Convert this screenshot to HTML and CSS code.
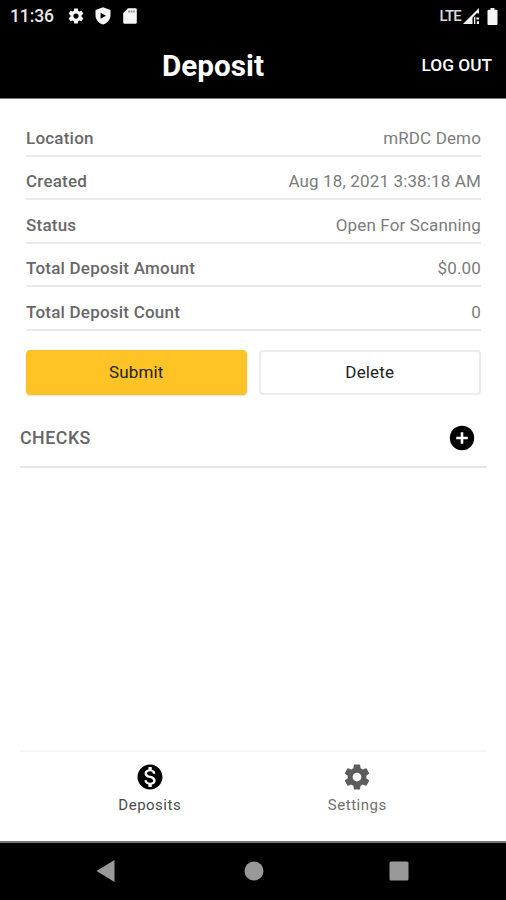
FILE: index.html
```html
<!DOCTYPE html>
<html lang="en">
<head>
<meta charset="utf-8">
<title>Deposit</title>
<link rel="stylesheet" href="styles.css">
</head>
<body>
<svg class="defs" width="0" height="0" aria-hidden="true">
  <symbol id="gear" viewBox="0 0 24 24"><path d="M19.43 12.98c.04-.32.07-.64.07-.98s-.03-.66-.07-.98l2.11-1.65c.19-.15.24-.42.12-.64l-2-3.46c-.12-.22-.39-.3-.61-.22l-2.49 1c-.52-.4-1.08-.73-1.69-.98l-.38-2.65C14.46 2.18 14.25 2 14 2h-4c-.25 0-.46.18-.49.42l-.38 2.65c-.61.25-1.17.59-1.69.98l-2.49-1c-.23-.09-.49 0-.61.22l-2 3.46c-.13.22-.07.49.12.64l2.11 1.65c-.04.32-.07.65-.07.98s.03.66.07.98l-2.11 1.65c-.19.15-.24.42-.12.64l2 3.46c.12.22.39.3.61.22l2.49-1c.52.4 1.08.73 1.69.98l.38 2.65c.03.24.24.42.49.42h4c.25 0 .46-.18.49-.42l.38-2.65c.61-.25 1.17-.59 1.69-.98l2.49 1c.23.09.49 0 .61-.22l2-3.46c.12-.22.07-.49-.12-.64l-2.11-1.65zM12 15.5c-1.93 0-3.5-1.57-3.5-3.5s1.57-3.5 3.5-3.5 3.5 1.57 3.5 3.5-1.57 3.5-3.5 3.5z"/></symbol>
</svg>
<header>
  <div class="status">
    <span class="clock">11:36</span>
    <svg class="s-gear"><use href="#gear"/></svg>
    <svg class="s-shield" viewBox="0 0 16 18"><path fill-rule="evenodd" d="M8 .3 15.5 3v5.4c0 4.200-3.200 7.600-7.500 9.100C3.700 16 .5 12.600 .5 8.400V3zM5.600 5.800v6L11 8.800z"/></svg>
    <svg class="s-card" viewBox="0 0 14 16"><path fill-rule="evenodd" d="M5 .3h7.500A1.300 1.300 0 0 1 13.800 1.600v12.800a1.300 1.300 0 0 1-1.300 1.300h-11A1.300 1.300 0 0 1 .2 14.400V5z"/><path class="card-pins" d="M5.200 2.500h1.600v2H5.200zM7.700 2.500h1.600v2H7.700zM10.200 2.500h1.600v2h-1.600z"/></svg>
    <span class="lte">LTE</span>
    <svg class="s-signal" viewBox="0 0 16 16"><path d="M0 16 16 0v5.500h-1.500V4.500L9.500 9.500V16zM11 9.500 12.300 8.200V16H11zM13.400 9.500H16v2h-2.600zM13.800 13.300H16V16h-2.200z"/></svg>
    <svg class="s-battery" viewBox="0 0 10 17"><path d="M3 0h4v1.800h2a1 1 0 0 1 1 1V16a1 1 0 0 1-1 1H1a1 1 0 0 1-1-1V2.800a1 1 0 0 1 1-1h2z"/></svg>
  </div>
  <div class="title-bar">
    <h1>Deposit</h1>
    <a class="logout">LOG OUT</a>
  </div>
</header>
<main>
  <dl class="details">
    <div class="row"><dt>Location</dt><dd>mRDC Demo</dd></div>
    <div class="row"><dt>Created</dt><dd>Aug 18, 2021 3:38:18 AM</dd></div>
    <div class="row"><dt>Status</dt><dd>Open For Scanning</dd></div>
    <div class="row"><dt>Total Deposit Amount</dt><dd>$0.00</dd></div>
    <div class="row"><dt>Total Deposit Count</dt><dd>0</dd></div>
  </dl>
  <div class="actions">
    <button class="submit">Submit</button>
    <button class="delete">Delete</button>
  </div>
  <section class="checks">
    <h2>CHECKS</h2>
    <svg class="add" viewBox="0 0 26 26"><circle cx="13" cy="13" r="12.200"/><path d="M13 7.200v11.600M7.200 13h11.600" stroke="#fff" stroke-width="2.600"/></svg>
  </section>
</main>
<nav class="tabs">
  <a class="tab active"><svg class="tab-icon" viewBox="0 0 24 24"><path d="M12 2C6.480 2 2 6.480 2 12s4.480 10 10 10 10-4.480 10-10S17.520 2 12 2zm1.410 16.090V20h-2.670v-1.930c-1.710-.36-3.160-1.460-3.270-3.400h1.960c.1 1.050.82 1.870 2.650 1.870 1.960 0 2.400-.98 2.400-1.590 0-.83-.44-1.610-2.670-2.140-2.480-.6-4.180-1.620-4.180-3.670 0-1.720 1.390-2.840 3.110-3.210V4h2.670v1.950c1.860.45 2.790 1.860 2.850 3.390H14.300c-.05-1.110-.64-1.870-2.220-1.870-1.500 0-2.400.68-2.400 1.640 0 .84.65 1.390 2.670 1.910s4.180 1.390 4.180 3.910c-.01 1.830-1.380 2.830-3.120 3.160z"/></svg><span>Deposits</span></a>
  <a class="tab"><svg class="tab-icon"><use href="#gear"/></svg><span>Settings</span></a>
</nav>
<footer>
  <svg class="back" viewBox="0 0 18 22"><path d="M18 0v22L0 11z"/></svg>
  <svg class="home" viewBox="0 0 20 20"><circle cx="10" cy="10" r="9.500"/></svg>
  <svg class="recent" viewBox="0 0 20 20"><rect x=".5" y=".5" width="19" height="19" rx="1.500"/></svg>
</footer>
</body>
</html>
```
FILE: styles.css
```css
* { box-sizing: border-box; margin: 0; padding: 0; }
body { width: 506px; height: 900px; display: flex; flex-direction: column; background: #fff; font-family: Roboto, sans-serif; overflow: hidden; }
.defs { display: none; }
svg { display: block; flex: none; }
header { height: 99px; background: #000; color: #fff; border-bottom: 1px solid #777; flex: none; }
.status { height: 32px; display: flex; align-items: center; padding: 0 8px 0 10px; }
.status svg { fill: #f6f6f6; }
.status .card-pins { fill: #888; }
.clock { width: 57px; font-size: 17.500px; font-weight: 500; letter-spacing: -.1px; color: #e8e8e8; }
.s-gear { width: 18px; height: 18px; }
.s-shield { width: 16px; height: 18px; margin-left: 10px; }
.s-card { width: 14px; height: 16px; margin-left: 12px; }
.lte { margin-left: auto; font-size: 15px; font-weight: 500; letter-spacing: -.8px; color: #ddd; }
.s-signal { width: 16px; height: 16px; margin-left: 2px; }
.s-battery { width: 11px; height: 17px; margin-left: 8px; }
.title-bar { height: 66px; display: flex; justify-content: space-between; align-items: center; padding: 1px 14px 0 162px; }
h1 { font-size: 29.700px; font-weight: 700; line-height: 34px; }
.logout { font-size: 17.300px; font-weight: 500; line-height: 20px; padding-bottom: 2px; }
main { flex: 1; padding: 14px 20px 0; }
.details { padding: 0 5px 0 6px; }
.row { height: 43.600px; display: flex; justify-content: space-between; align-items: flex-end; padding-bottom: 5px; border-bottom: 2px solid #ebebeb; font-size: 17px; line-height: 24px; color: #686868; }
dt { font-weight: 500; letter-spacing: .22px; }
dd { color: #7c7c7c; font-weight: 400; letter-spacing: .14px; }
.actions { display: flex; gap: 12px; padding: 0 5px 0 6px; margin-top: 19px; }
button { flex: 1; height: 45px; border-radius: 4px; font: 400 17px Roboto, sans-serif; letter-spacing: .15px; color: #222; }
.submit { background: #ffc325; border: 1px solid #f8bf2a; box-shadow: 0 1px 2px #ddd; }
.delete { background: #fff; border: 2px solid #ececec; }
.checks { height: 73px; display: flex; justify-content: space-between; align-items: center; padding: 15px 12px 0 0; border-bottom: 2px solid #e6e6e6; margin-right: -1px; }
h2 { font-size: 17.800px; font-weight: 500; letter-spacing: .5px; color: #666; }
.add { width: 26px; height: 26px; }
.tabs { height: 91px; margin: 0 19px 0 20px; border-top: 2px solid #f6f6f6; display: flex; justify-content: center; padding: 10px 26px 0; flex: none; }
.tab { flex: 1; display: flex; flex-direction: column; align-items: center; color: #707070; fill: #5c5c5c; font-size: 15px; line-height: 20px; letter-spacing: .5px; }
.tab.active { color: #4a4a4a; fill: #000; }
.tab-icon { width: 30px; height: 30px; }
.tab span { margin-top: 3px; }
footer { height: 59px; background: #000; border-top: 2px solid #777; display: flex; align-items: center; padding: 0 97px 1px 96px; justify-content: space-between; fill: #999; flex: none; }
.back { width: 19px; height: 22px; }
.home { width: 20px; height: 20px; margin-left: 3px; }
.recent { width: 20px; height: 20px; }
```
